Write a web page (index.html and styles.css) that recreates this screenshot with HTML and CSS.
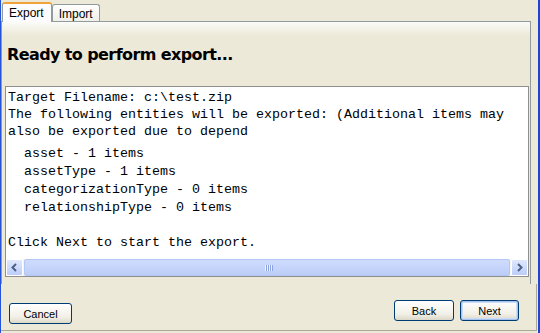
FILE: index.html
```html
<!DOCTYPE html>
<html lang="en">
<head>
    <meta charset="UTF-8">
    <title>Export Wizard</title>
    <link rel="stylesheet" href="styles.css">
</head>
<body>
    <div class="window">
        <div class="tabs">
            <div class="tab active">Export</div>
            <div class="tab">Import</div>
        </div>

        <div class="panel">
            <h1>Ready to perform export...</h1>

            <div class="textbox">
                <div class="text">
                    <div class="line">Target Filename: c:\test.zip</div>
                    <div class="line">The following entities will be exported: (Additional items may</div>
                    <div class="line">also be exported due to depend</div>
                    <ul class="entity-list">
                        <li>asset - 1 items</li>
                        <li>assetType - 1 items</li>
                        <li>categorizationType - 0 items</li>
                        <li>relationshipType - 0 items</li>
                    </ul>
                    <div class="line last">Click Next to start the export.</div>
                </div>
                <div class="hscroll">
                    <div class="sb-btn">
                        <svg width="9" height="9" viewBox="0 0 9 9"><path d="M6 1 L2.5 4.5 L6 8" fill="none" stroke="#4d6185" stroke-width="2"/></svg>
                    </div>
                    <div class="sb-thumb">
                        <span class="grip"></span>
                    </div>
                    <div class="sb-btn">
                        <svg width="9" height="9" viewBox="0 0 9 9"><path d="M3 1 L6.5 4.5 L3 8" fill="none" stroke="#4d6185" stroke-width="2"/></svg>
                    </div>
                </div>
            </div>
        </div>

        <div class="footer">
            <button class="btn btn-cancel">Cancel</button>
            <div class="nav-buttons">
                <button class="btn">Back</button>
                <button class="btn btn-default">Next</button>
            </div>
        </div>
    </div>
</body>
</html>
```

FILE: styles.css
```css
* { margin: 0; padding: 0; box-sizing: border-box; }
body { background: #ece9d8; font-family: 'Liberation Sans', Arial, sans-serif; font-size: 11px; color: #000; }
.window { width: 540px; height: 333px; border-left: 1px solid #2453d8; border-right: 2px solid #1d46d4; background: #ece9d8; overflow: hidden; }

.tabs { display: flex; align-items: flex-end; height: 21px; padding-left: 1px; }
.tab { height: 17px; padding: 2px 6px 0; border: 1px solid #919b9c; border-bottom: none; border-radius: 3px 3px 0 0; background: linear-gradient(#ffffff, #f0efe8); font-size: 12px; line-height: 14px; color: #000; }
.tab.active { height: 20px; margin-bottom: -1px; padding: 2px 7px 0 6px; border-top: 2px solid #f1a33b; background: #fcfcfe; position: relative; z-index: 1; }

.panel { width: 530px; height: 263px; border: 1px solid #919b9c; border-bottom: none; background: linear-gradient(#fbfbf8, #ece9d8 14px); padding: 0 0 0 3px; }
.panel h1 { margin: 23px 0 0 2px; font-family: 'DejaVu Sans', Verdana, sans-serif; font-size: 16px; line-height: 19px; font-weight: bold; letter-spacing: -0.6px; }

.textbox { display: flex; flex-direction: column; width: 524px; height: 191px; margin-top: 22px; border: 1px solid #8f8f8f; background: #fff; }
.text { flex: 1; padding: 2px 0 0 2px; font-family: 'Liberation Mono', 'Courier New', monospace; font-size: 13.33px; white-space: nowrap; overflow: hidden; }
.line { height: 17px; line-height: 17px; }
.line.last { margin-top: 17px; }
.entity-list { list-style: none; margin-top: 5px; padding-left: 16px; }
.entity-list li { height: 18px; line-height: 18px; }

.hscroll { display: flex; height: 17px; background: #f7f6f1; }
.sb-btn { width: 17px; height: 17px; display: flex; align-items: center; justify-content: center; border: 1px solid #fff; border-radius: 2px; background: linear-gradient(#dfe8fe, #bccdf8); }
.sb-thumb { flex: 1; margin: 0 1px; display: flex; align-items: center; justify-content: center; border: 1px solid #b3c7f4; border-radius: 2px; background: linear-gradient(#cfdcfd, #bccdf8); }
.grip { width: 8px; height: 6px; margin-left: 4px; background: repeating-linear-gradient(90deg, #eef3fe 0 1px, #8aa3de 1px 2px); }

.footer { display: flex; justify-content: space-between; align-items: flex-start; width: 536px; height: 47px; padding: 16px 17px 0 8px; border-right: 1px solid #aca899; border-bottom: 1px solid #aca899; }
.nav-buttons { display: flex; gap: 6px; }
.btn { width: 60px; height: 21px; border: 1px solid #003c74; border-radius: 3px; background: linear-gradient(#ffffff, #f1efe6 70%, #dcd8c8); font-family: 'Liberation Sans', Arial, sans-serif; font-size: 11px; color: #000; }
.btn-cancel { width: 63px; margin-top: 3px; }
.btn-default { width: 59px; box-shadow: inset 0 0 0 1px #a6c2ee, inset 0 0 0 2px #cddcf5; }
```
